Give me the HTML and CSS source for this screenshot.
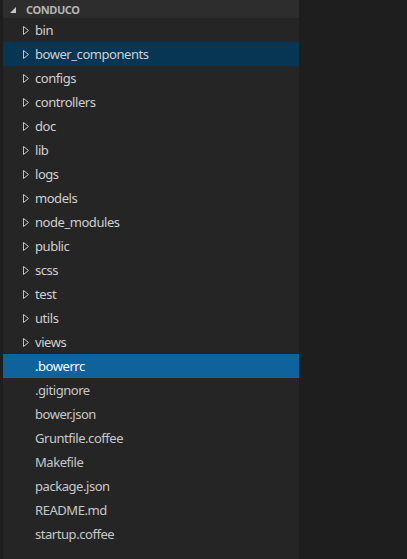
FILE: index.html
```html
<!DOCTYPE html>
<html>
<head>
<meta charset="utf-8">
<link rel="stylesheet" href="styles.css">
</head>
<body>
<div class="app">
  <div class="gutter"></div>
  <div class="sidebar">
    <div class="header">
      <svg class="tw" width="6" height="6" viewBox="0 0 6 6"><polygon points="6,0 6,6 0,6" fill="#c5c5c5"/></svg>
      <span>CONDUCO</span>
    </div>
    <div class="row"><svg class="chev" width="6" height="9" viewBox="0 0 6 9"><polygon points="0.5,0.5 5.5,4.5 0.5,8.5" fill="none" stroke="#c5c5c5" stroke-width="1"/></svg><span>bin</span></div>
    <div class="row focus"><svg class="chev" width="6" height="9" viewBox="0 0 6 9"><polygon points="0.5,0.5 5.5,4.5 0.5,8.5" fill="none" stroke="#c5c5c5" stroke-width="1"/></svg><span>bower_components</span></div>
    <div class="row"><svg class="chev" width="6" height="9" viewBox="0 0 6 9"><polygon points="0.5,0.5 5.5,4.5 0.5,8.5" fill="none" stroke="#c5c5c5" stroke-width="1"/></svg><span>configs</span></div>
    <div class="row"><svg class="chev" width="6" height="9" viewBox="0 0 6 9"><polygon points="0.5,0.5 5.5,4.5 0.5,8.5" fill="none" stroke="#c5c5c5" stroke-width="1"/></svg><span>controllers</span></div>
    <div class="row"><svg class="chev" width="6" height="9" viewBox="0 0 6 9"><polygon points="0.5,0.5 5.5,4.5 0.5,8.5" fill="none" stroke="#c5c5c5" stroke-width="1"/></svg><span>doc</span></div>
    <div class="row"><svg class="chev" width="6" height="9" viewBox="0 0 6 9"><polygon points="0.5,0.5 5.5,4.5 0.5,8.5" fill="none" stroke="#c5c5c5" stroke-width="1"/></svg><span>lib</span></div>
    <div class="row"><svg class="chev" width="6" height="9" viewBox="0 0 6 9"><polygon points="0.5,0.5 5.5,4.5 0.5,8.5" fill="none" stroke="#c5c5c5" stroke-width="1"/></svg><span>logs</span></div>
    <div class="row"><svg class="chev" width="6" height="9" viewBox="0 0 6 9"><polygon points="0.5,0.5 5.5,4.5 0.5,8.5" fill="none" stroke="#c5c5c5" stroke-width="1"/></svg><span>models</span></div>
    <div class="row"><svg class="chev" width="6" height="9" viewBox="0 0 6 9"><polygon points="0.5,0.5 5.5,4.5 0.5,8.5" fill="none" stroke="#c5c5c5" stroke-width="1"/></svg><span>node_modules</span></div>
    <div class="row"><svg class="chev" width="6" height="9" viewBox="0 0 6 9"><polygon points="0.5,0.5 5.5,4.5 0.5,8.5" fill="none" stroke="#c5c5c5" stroke-width="1"/></svg><span>public</span></div>
    <div class="row"><svg class="chev" width="6" height="9" viewBox="0 0 6 9"><polygon points="0.5,0.5 5.5,4.5 0.5,8.5" fill="none" stroke="#c5c5c5" stroke-width="1"/></svg><span>scss</span></div>
    <div class="row"><svg class="chev" width="6" height="9" viewBox="0 0 6 9"><polygon points="0.5,0.5 5.5,4.5 0.5,8.5" fill="none" stroke="#c5c5c5" stroke-width="1"/></svg><span>test</span></div>
    <div class="row"><svg class="chev" width="6" height="9" viewBox="0 0 6 9"><polygon points="0.5,0.5 5.5,4.5 0.5,8.5" fill="none" stroke="#c5c5c5" stroke-width="1"/></svg><span>utils</span></div>
    <div class="row"><svg class="chev" width="6" height="9" viewBox="0 0 6 9"><polygon points="0.5,0.5 5.5,4.5 0.5,8.5" fill="none" stroke="#c5c5c5" stroke-width="1"/></svg><span>views</span></div>
    <div class="row file selected"><span>.bowerrc</span></div>
    <div class="row file"><span>.gitignore</span></div>
    <div class="row file"><span>bower.json</span></div>
    <div class="row file"><span>Gruntfile.coffee</span></div>
    <div class="row file"><span>Makefile</span></div>
    <div class="row file"><span>package.json</span></div>
    <div class="row file"><span>README.md</span></div>
    <div class="row file"><span>startup.coffee</span></div>
  </div>
  <div class="editor"></div>
</div>
</body>
</html>
```

FILE: styles.css
```css
html, body {
  margin: 0;
  padding: 0;
  height: 100%;
  background: #1e1e1e;
}
.app {
  display: flex;
  height: 559px;
  font-family: "Noto Sans", "Open Sans", sans-serif;
}
.gutter {
  width: 3px;
  background: #1e1e1e;
}
.sidebar {
  width: 296px;
  background: #252526;
  display: flex;
  flex-direction: column;
}
.editor {
  flex: 1;
  background: #1e1e1e;
}
.header {
  height: 18px;
  background: #2d2d2d;
  display: flex;
  align-items: center;
  padding-left: 7px;
  color: #b4b4b4;
  font-size: 11px;
  font-weight: bold;
  letter-spacing: -0.4px;
}
.header .tw {
  margin-right: 10px;
  margin-top: 1px;
}
.row {
  height: 24px;
  display: flex;
  align-items: center;
  padding-left: 20px;
  color: #d0d0d0;
  font-size: 13px;
  letter-spacing: -0.45px;
}
.row .chev {
  margin-right: 6px;
}
.row.file {
  padding-left: 32px;
  color: #c8c8c8;
}
.row.focus {
  background: #073655;
}
.row.selected {
  background: #0e639c;
  color: #ffffff;
}
```
